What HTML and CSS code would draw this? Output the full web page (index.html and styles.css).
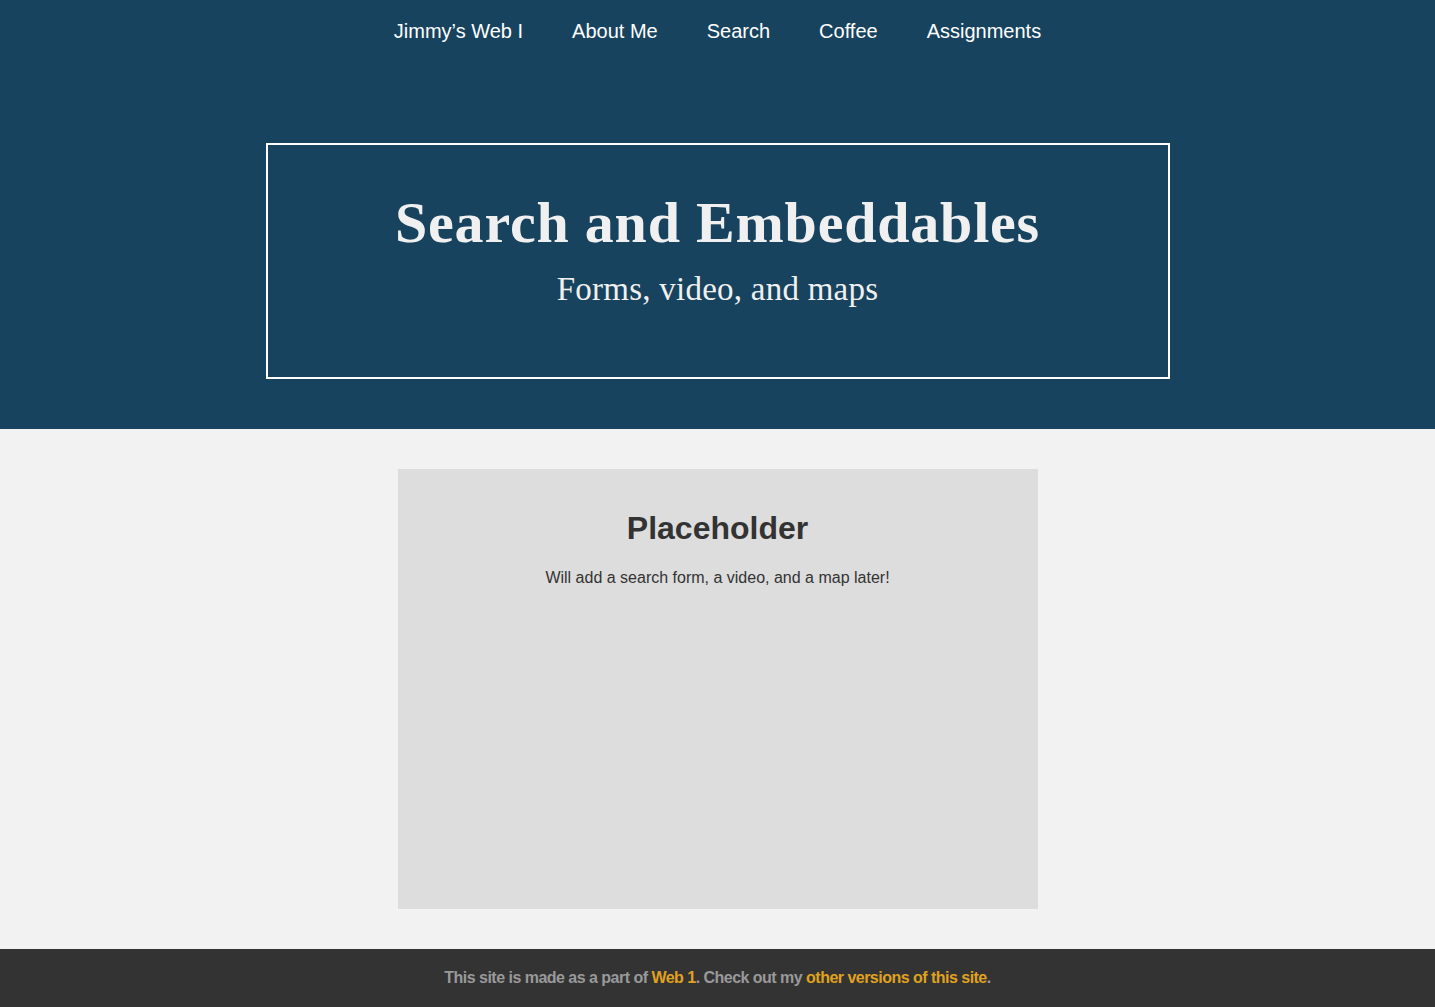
FILE: index.html
```html
<!DOCTYPE html>
<html lang="en">
<head>
<meta charset="utf-8">
<title>Search and Embeddables</title>
<link rel="stylesheet" href="styles.css">
</head>
<body>
<header class="site-header">
  <nav class="nav">
    <a class="nav-link" href="#">Jimmy’s Web I</a>
    <a class="nav-link" href="#">About Me</a>
    <a class="nav-link" href="#">Search</a>
    <a class="nav-link" href="#">Coffee</a>
    <a class="nav-link" href="#">Assignments</a>
  </nav>
  <div class="hero">
    <h1 class="hero-title">Search and Embeddables</h1>
    <p class="hero-sub">Forms, video, and maps</p>
  </div>
</header>
<main class="main">
  <section class="card">
    <h2 class="card-title">Placeholder</h2>
    <p class="card-text">Will add a search form, a video, and a map later!</p>
  </section>
</main>
<footer class="footer">
  <p class="footer-text">This site is made as a part of <a class="footer-link" href="#">Web 1</a>. Check out my <a class="footer-link" href="#">other versions of this site</a>.</p>
</footer>
</body>
</html>
```

FILE: styles.css
```css
* { box-sizing: border-box; }
html, body { margin: 0; padding: 0; }
body {
  font-family: "Liberation Sans", Arial, sans-serif;
  background: #f2f2f2;
  color: #333;
}
.site-header {
  background: #17435e;
  padding-bottom: 50px;
}
.nav {
  display: flex;
  justify-content: center;
  height: 62px;
  align-items: center;
}
.nav-link {
  color: #fff;
  text-decoration: none;
  font-size: 20px;
  letter-spacing: 0;
  padding: 0 24.5px;
}
.hero {
  width: 904px;
  margin: 81px auto 0;
  border: 2px solid #fff;
  height: 236px;
  text-align: center;
  padding-top: 47px;
}
.hero-title {
  margin: 0;
  font-family: "Liberation Serif", "Times New Roman", serif;
  font-weight: bold;
  font-size: 58px;
  line-height: 62px;
  letter-spacing: 0.8px;
  color: #f0f0f0;
}
.hero-sub {
  margin: 16px 0 0;
  font-family: "Liberation Serif", "Times New Roman", serif;
  font-size: 33px;
  line-height: 38px;
  letter-spacing: 0.25px;
  color: #f0f0f0;
}
.main {
  padding: 40px 0;
}
.card {
  width: 640px;
  height: 440px;
  margin: 0 auto;
  background: #dddddd;
  text-align: center;
  padding-top: 40px;
}
.card-title {
  margin: 0;
  font-size: 32px;
  line-height: 38px;
  font-weight: bold;
  color: #333;
}
.card-text {
  margin: 20px 0 0;
  font-size: 16px;
  line-height: 22px;
  color: #333;
}
.footer {
  background: #333;
  height: 58px;
  display: flex;
  align-items: center;
  justify-content: center;
}
.footer-text {
  margin: 0;
  font-size: 16px;
  font-weight: bold;
  letter-spacing: -0.52px;
  color: #999;
}
.footer-link {
  color: #e0a21e;
  text-decoration: none;
}
```
